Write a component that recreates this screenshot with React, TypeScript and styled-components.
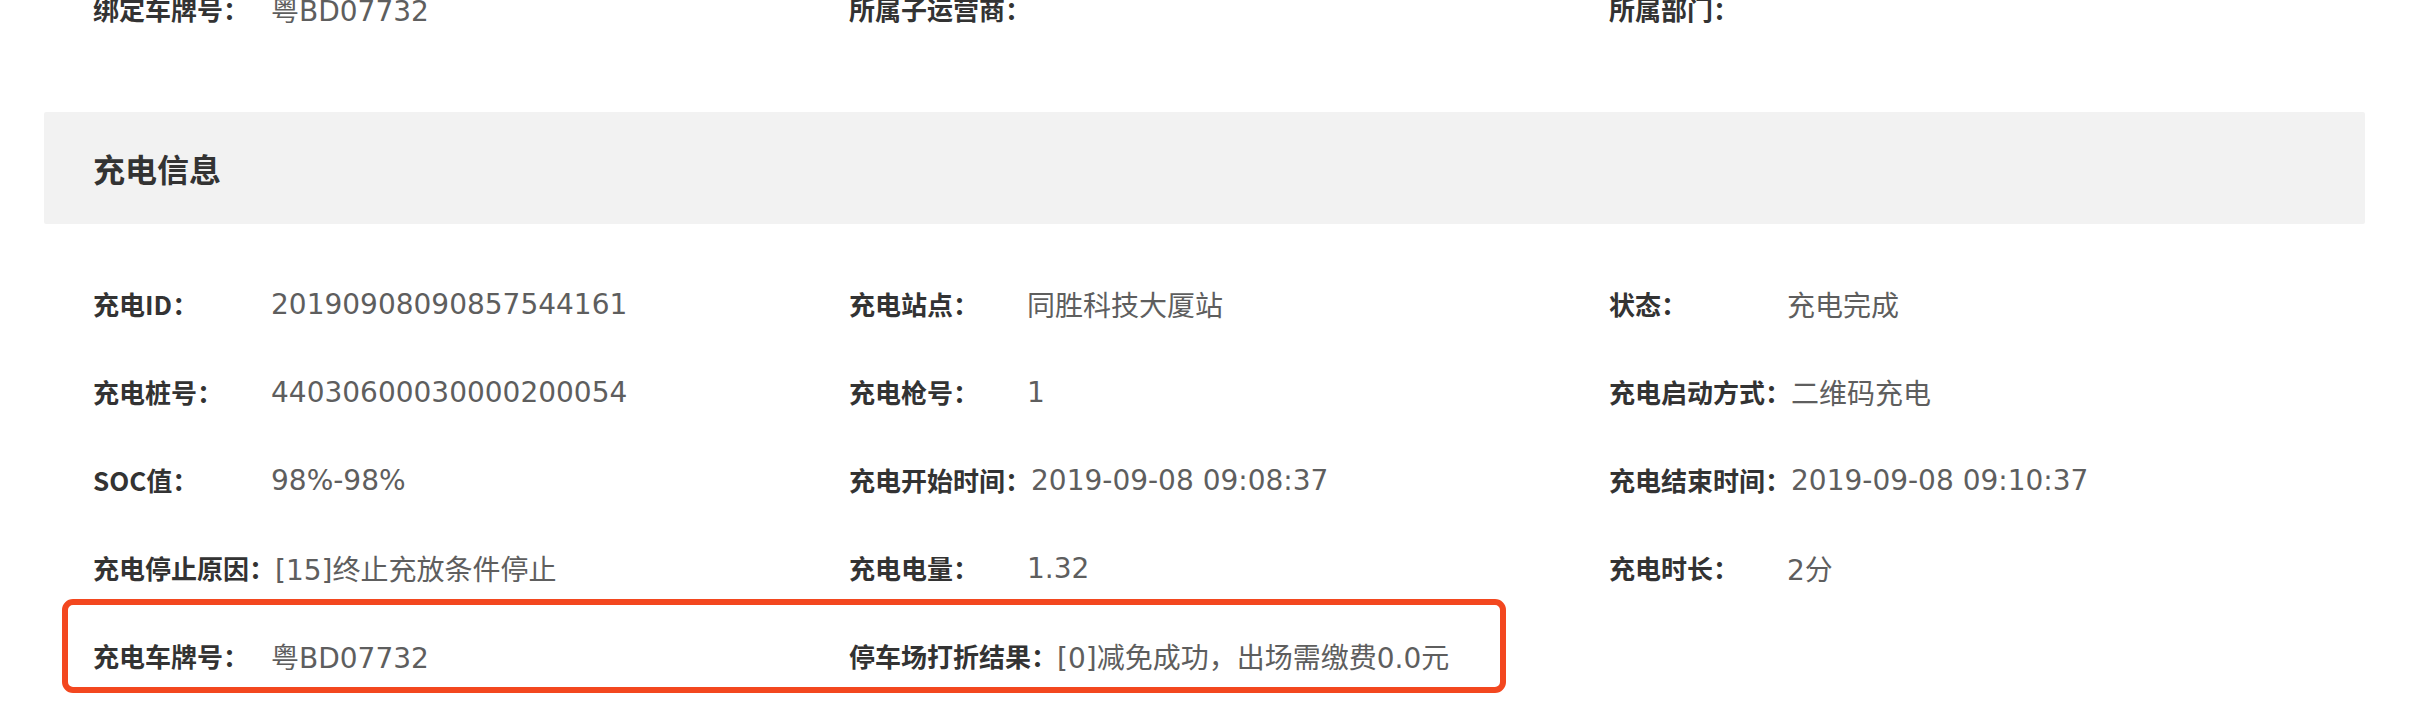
import React from "react";
import styled, { createGlobalStyle } from "styled-components";

const GlobalStyle = createGlobalStyle`
  html, body {
    margin: 0;
    padding: 0;
    background: #ffffff;
    overflow: hidden;
  }
  body {
    font-family: "Noto Sans CJK SC", "Noto Sans", sans-serif;
  }
`;

const Page = styled.div`
  width: 2321px;
  padding-left: 44px;
`;

const Grid = styled.div<{ offset?: number }>`
  position: relative;
  display: grid;
  grid-template-columns: 756px 760px 1fr;
  padding-left: 49px;
  margin-top: ${(props) => props.offset || 0}px;
`;

const Field = styled.div`
  display: flex;
  align-items: center;
  height: 88px;
  white-space: nowrap;
`;

const Label = styled.span`
  min-width: 178px;
  font-family: "Noto Sans CJK SC", sans-serif;
  font-size: 26px;
  font-weight: 700;
  color: #333333;
`;

const Value = styled.span`
  font-family: "DejaVu Sans", "Noto Sans CJK SC", sans-serif;
  font-size: 28px;
  color: #5e5e5e;
  padding-top: 2px;
`;

const SectionHeader = styled.div`
  display: flex;
  align-items: center;
  height: 112px;
  margin-top: 60px;
  padding-left: 49px;
  background: #f2f2f2;
  border-radius: 2px;
  font-size: 32px;
  font-weight: 700;
  color: #333333;
`;

const Highlight = styled.div`
  position: absolute;
  left: 18px;
  top: 340px;
  width: 1444px;
  height: 94px;
  box-sizing: border-box;
  border: 6px solid #f3471f;
  border-radius: 11px;
  pointer-events: none;
`;

type Item = [string, string];

const topRow: Item[] = [
  ["绑定车牌号：", "粤BD07732"],
  ["所属子运营商：", ""],
  ["所属部门：", ""],
];

const chargeInfo: Item[] = [
  ["充电ID：", "20190908090857544161"],
  ["充电站点：", "同胜科技大厦站"],
  ["状态：", "充电完成"],
  ["充电桩号：", "44030600030000200054"],
  ["充电枪号：", "1"],
  ["充电启动方式：", "二维码充电"],
  ["SOC值：", "98%-98%"],
  ["充电开始时间：", "2019-09-08 09:08:37"],
  ["充电结束时间：", "2019-09-08 09:10:37"],
  ["充电停止原因：", "[15]终止充放条件停止"],
  ["充电电量：", "1.32"],
  ["充电时长：", "2分"],
  ["充电车牌号：", "粤BD07732"],
  ["停车场打折结果：", "[0]减免成功，出场需缴费0.0元"],
];

function Fields({ items }: { items: Item[] }) {
  return (
    <>
      {items.map(([label, value]) => (
        <Field key={label}>
          <Label>{label}</Label>
          <Value>{value}</Value>
        </Field>
      ))}
    </>
  );
}

export default function App() {
  return (
    <Page>
      <GlobalStyle />
      <Grid offset={-36}>
        <Fields items={topRow} />
      </Grid>
      <SectionHeader>充电信息</SectionHeader>
      <Grid offset={35}>
        <Fields items={chargeInfo} />
        <Highlight />
      </Grid>
    </Page>
  );
}
